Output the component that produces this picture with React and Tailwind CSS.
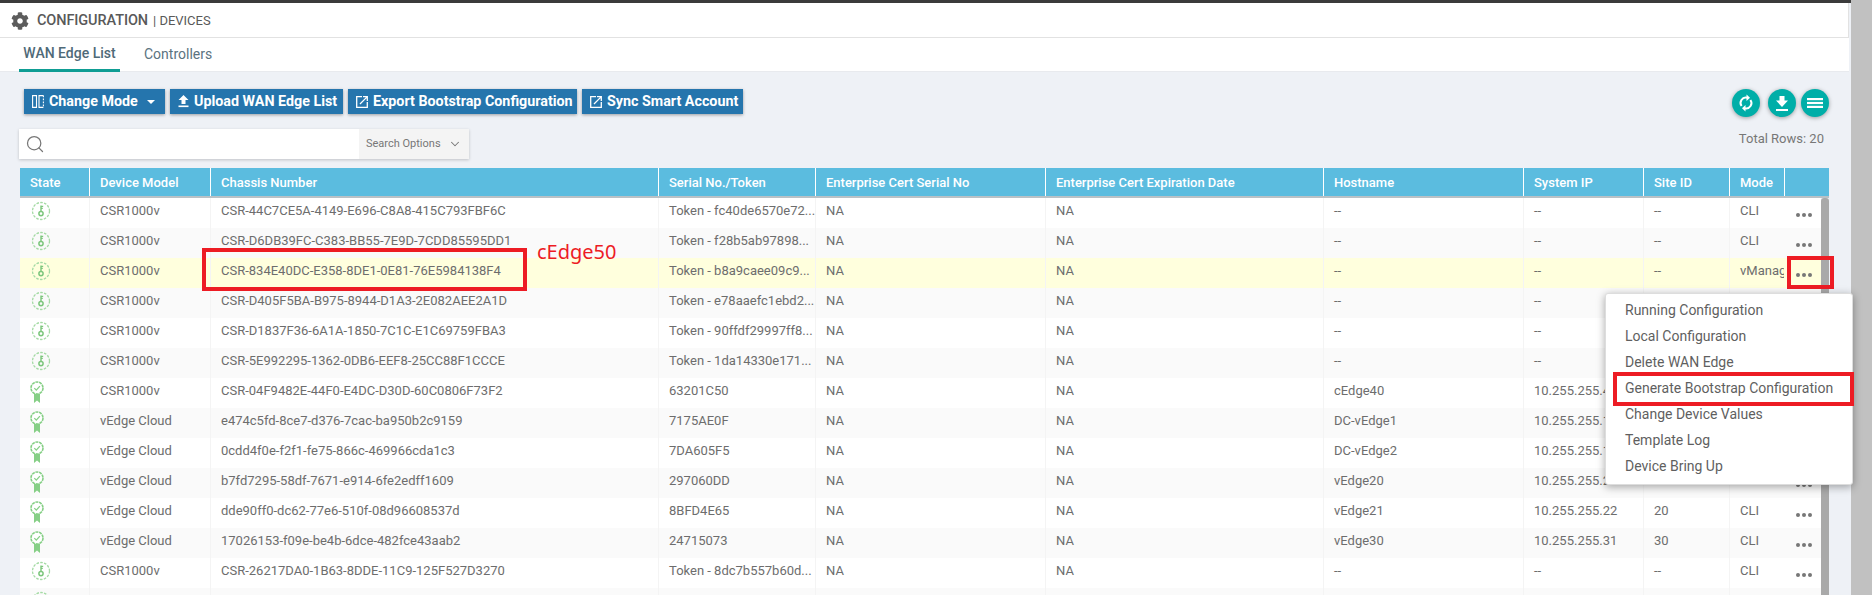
import { FaCog } from "react-icons/fa";
import { Search, ChevronDown } from "lucide-react";

const csr = "CSR1000v";
const cloud = "vEdge Cloud";

const rows = [
  { key: true, model: csr, chassis: "CSR-44C7CE5A-4149-E696-C8A8-415C793FBF6C", serial: "Token - fc40de6570e72...", host: "--", ip: "--", site: "--", mode: "CLI" },
  { key: true, model: csr, chassis: "CSR-D6DB39FC-C383-BB55-7E9D-7CDD85595DD1", serial: "Token - f28b5ab97898...", host: "--", ip: "--", site: "--", mode: "CLI" },
  { key: true, model: csr, chassis: "CSR-834E40DC-E358-8DE1-0E81-76E5984138F4", serial: "Token - b8a9caee09c9...", host: "--", ip: "--", site: "--", mode: "vManage", active: true },
  { key: true, model: csr, chassis: "CSR-D405F5BA-B975-8944-D1A3-2E082AEE2A1D", serial: "Token - e78aaefc1ebd2...", host: "--", ip: "--", site: "--", mode: "CLI" },
  { key: true, model: csr, chassis: "CSR-D1837F36-6A1A-1850-7C1C-E1C69759FBA3", serial: "Token - 90ffdf29997ff8...", host: "--", ip: "--", site: "--", mode: "CLI" },
  { key: true, model: csr, chassis: "CSR-5E992295-1362-0DB6-EEF8-25CC88F1CCCE", serial: "Token - 1da14330e171...", host: "--", ip: "--", site: "--", mode: "CLI" },
  { model: csr, chassis: "CSR-04F9482E-44F0-E4DC-D30D-60C0806F73F2", serial: "63201C50", host: "cEdge40", ip: "10.255.255.41", site: "40", mode: "CLI" },
  { model: cloud, chassis: "e474c5fd-8ce7-d376-7cac-ba950b2c9159", serial: "7175AE0F", host: "DC-vEdge1", ip: "10.255.255.11", site: "10", mode: "CLI" },
  { model: cloud, chassis: "0cdd4f0e-f2f1-fe75-866c-469966cda1c3", serial: "7DA605F5", host: "DC-vEdge2", ip: "10.255.255.12", site: "10", mode: "CLI" },
  { model: cloud, chassis: "b7fd7295-58df-7671-e914-6fe2edff1609", serial: "297060DD", host: "vEdge20", ip: "10.255.255.21", site: "20", mode: "CLI" },
  { model: cloud, chassis: "dde90ff0-dc62-77e6-510f-08d96608537d", serial: "8BFD4E65", host: "vEdge21", ip: "10.255.255.22", site: "20", mode: "CLI" },
  { model: cloud, chassis: "17026153-f09e-be4b-6dce-482fce43aab2", serial: "24715073", host: "vEdge30", ip: "10.255.255.31", site: "30", mode: "CLI" },
  { key: true, model: csr, chassis: "CSR-26217DA0-1B63-8DDE-11C9-125F527D3270", serial: "Token - 8dc7b557b60d...", host: "--", ip: "--", site: "--", mode: "CLI" },
  { key: true, model: csr, chassis: "CSR-7B1F0C52-3E41-9A07-5D2C-60A1E48C92D7", serial: "Token - 4ac1e0b97d35...", host: "--", ip: "--", site: "--", mode: "CLI" },
];

const headers = [
  "State",
  "Device Model",
  "Chassis Number",
  "Serial No./Token",
  "Enterprise Cert Serial No",
  "Enterprise Cert Expiration Date",
  "Hostname",
  "System IP",
  "Site ID",
  "Mode",
  "",
];

const menuItems = [
  "Running Configuration",
  "Local Configuration",
  "Delete WAN Edge",
  "Generate Bootstrap Configuration",
  "Change Device Values",
  "Template Log",
  "Device Bring Up",
];

const KeyIcon = () => (
  <svg width="20" height="20" viewBox="0 0 20 20" fill="none" className="ml-[12px]">
    <circle cx="10" cy="10" r="8.5" stroke="#a5dba5" strokeWidth="1.3" strokeDasharray="2.6 1.3" />
    <circle cx="10" cy="12.6" r="2.1" stroke="#7cc67c" strokeWidth="1.5" />
    <path d="M10 10.5V4.6M10 5.4h2.2M10 7.4h1.8" stroke="#7cc67c" strokeWidth="1.4" />
  </svg>
);

const CertIcon = () => (
  <svg width="16" height="22" viewBox="0 0 16 22" fill="none" className="ml-[10px]">
    <path d="M5 13v9l3-2.4 3 2.4v-9z" fill="#86cf86" />
    <circle cx="8" cy="7" r="6" fill="#fff" stroke="#86cf86" strokeWidth="1.6" strokeDasharray="3 0.7" />
    <path d="M5.3 7.1l2 2 3.6-4" stroke="#86cf86" strokeWidth="1.3" />
  </svg>
);

const SplitIcon = () => (
  <svg width="12" height="13" viewBox="0 0 12 13" fill="none" stroke="#fff" strokeWidth="1.1">
    <path d="M4.5 0.6H0.6v11.8h3.9M4.5 0v13M7 0v13" />
    <path d="M7 0.6h4.4M11.4 0.6v1.6M11.4 3.6v1.6M11.4 6.6v1.6M11.4 9.6v1.6M7 12.4h4.4" />
  </svg>
);

const UploadIcon = () => (
  <svg width="11" height="13" viewBox="0 0 11 13" fill="#fff">
    <path d="M5.5 0L10.5 5H7.5V9H3.5V5H0.5z" />
    <rect x="0.5" y="10.5" width="10" height="1.6" />
  </svg>
);

const ExportIcon = () => (
  <svg width="12" height="12" viewBox="0 0 12 12" fill="none" stroke="#fff" strokeWidth="1.3">
    <path d="M6 0.7H0.7v10.6h10.6V6" />
    <path d="M4 8L10.6 1.4M7 0.7h4.3V5" />
  </svg>
);

const ActionButton = ({ icon, label, caret, width }) => (
  <button type="button" className={`h-[25px] ${width} bg-[#2575ad] text-white text-[14.3px] font-bold flex items-center pl-[8px] gap-[5px] whitespace-nowrap shadow-[0_1px_3px_rgba(0,0,0,0.35)]`}>
    {icon}
    {label}
    {caret && <span className="ml-[4px] w-0 h-0 border-x-[4px] border-x-transparent border-t-[4px] border-t-white" />}
  </button>
);

const RoundButton = ({ children }) => (
  <button type="button" className="w-[28px] h-[28px] rounded-full bg-[#00aea8] flex items-center justify-center shadow-[0_1px_4px_rgba(0,0,0,0.35)]">
    {children}
  </button>
);

const rowColor = (row, i) => {
  if (row.active) return "bg-[#ffffdd]";
  return i % 2 === 0 ? "bg-white" : "bg-[#fafafa]";
};

const App = () => {
  return (
    <div className="relative w-[1874px] h-[595px] overflow-hidden flex bg-white font-[Roboto,sans-serif]">
      <div className="w-[1851px] h-full flex flex-col bg-[#eef1f6]">
        <div className="h-[3px] bg-[#3b3b3b] shrink-0" />

        <div className="w-[1849px] h-[35px] shrink-0 bg-white border-b border-[#e2e2e2] border-r flex items-center pl-[11px] pt-[1px] gap-[8px] text-[#595959]">
          <FaCog className="text-[18px] text-[#5c5c5c]" />
          <span className="text-[14.5px] font-medium tracking-[-0.1px]">CONFIGURATION</span>
          <span className="text-[13px] -ml-[3px]">| DEVICES</span>
        </div>

        <div className="w-[1849px] h-[34px] shrink-0 bg-white border-b border-[#e8eaee] flex pl-[19px] text-[14px]">
          <div className="w-[101px] h-[34px] border-b-[3px] border-[#0f9d94] flex items-center justify-center font-medium text-[#4f6a78] pb-[1px]">
            WAN Edge List
          </div>
          <div className="ml-[24px] h-[34px] flex items-center text-[#5b7380] pb-[3px] pt-[2px]">Controllers</div>
        </div>

        <div className="flex flex-col pl-[19px] pr-[22px] pt-[17px]">
          <div className="flex justify-between items-start">
            <div className="flex gap-[5px] ml-[5px]">
              <ActionButton icon={<SplitIcon />} label="Change Mode" caret width="w-[141px]" />
              <ActionButton icon={<UploadIcon />} label="Upload WAN Edge List" width="w-[173px]" />
              <ActionButton icon={<ExportIcon />} label="Export Bootstrap Configuration" width="w-[229px]" />
              <ActionButton icon={<ExportIcon />} label="Sync Smart Account" width="w-[161px]" />
            </div>
            <div className="flex items-center">
              <RoundButton>
                <svg width="18" height="18" viewBox="0 0 18 18" fill="none" stroke="#fff" strokeWidth="2">
                  <path d="M10 3.7A5.3 5.3 0 0 0 4.6 12" />
                  <path d="M8 14.3A5.3 5.3 0 0 0 13.4 6" />
                  <path d="M9.5.5L13 3.7 9.5 7z" fill="#fff" stroke="none" />
                  <path d="M8.5 17.5L5 14.3 8.5 11z" fill="#fff" stroke="none" />
                </svg>
              </RoundButton>
              <div className="ml-[8px]">
                <RoundButton>
                  <svg width="12" height="15" viewBox="0 0 12 15" fill="#fff">
                    <path d="M3.5 0h5v4.5H12L6 11 0 4.5h3.5z" />
                    <rect y="13" width="12" height="2" />
                  </svg>
                </RoundButton>
              </div>
              <div className="ml-[5px]">
                <RoundButton>
                  <svg width="16" height="10" viewBox="0 0 16 10" fill="#fff">
                    <rect width="16" height="2.2" />
                    <rect y="3.9" width="16" height="2.2" />
                    <rect y="7.8" width="16" height="2.2" />
                  </svg>
                </RoundButton>
              </div>
            </div>
          </div>

          <div className="flex justify-between items-start mt-[12px]">
            <div className="w-[450px] h-[30px] bg-white flex shadow-[0_1px_3px_rgba(0,0,0,0.2)]">
              <div className="w-[340px] flex items-center pl-[6px]">
                <Search size={20} strokeWidth={1.5} className="text-[#777]" />
              </div>
              <div className="flex-1 bg-[#f4f4f4] flex items-center pl-[7px] gap-[7px] text-[11px] text-[#777]">
                Search Options
                <ChevronDown size={14} strokeWidth={1.8} />
              </div>
            </div>
            <span className="mr-[5px] text-[13px] text-[#777]">Total Rows: 20</span>
          </div>

          <div className="mt-[9px] ml-[1px] w-[1809px]">
            <div className="grid grid-cols-[69px_121px_448px_157px_230px_278px_200px_120px_86px_55px_45px] h-[30px] bg-[#5bbcdf] border-b-2 border-[#b9c1c6] text-white text-[13px] font-medium">
              {headers.map((h, i) => (
                <div key={i} className={`flex items-center pl-[10px] pt-[2px] whitespace-nowrap ${i > 0 ? "border-l border-white" : ""}`}>
                  {h}
                </div>
              ))}
            </div>

            <div className="flex">
              <div className="w-[1801px]">
                {rows.map((row, i) => (
                  <div
                    key={row.chassis}
                    className={`grid grid-cols-[69px_121px_448px_157px_230px_278px_200px_120px_86px_55px_37px] h-[30px] text-[13px] text-[#6d6d6d] ${rowColor(row, i)}`}
                  >
                    <div className="flex items-start pt-[3px] -ml-[1px]">
                      {row.key ? <KeyIcon /> : <CertIcon />}
                    </div>
                    {[row.model, row.chassis, row.serial, "NA", "NA", row.host, row.ip, row.site, row.mode].map((val, j) => (
                      <div key={j} className="border-l border-[#f4f4f4] pl-[10px] pb-[4px] flex items-center whitespace-nowrap overflow-hidden">
                        {val}
                      </div>
                    ))}
                    <div className="flex items-center justify-center gap-[2px] pt-[4px] pl-[2px]">
                      <span className="w-[4px] h-[4px] rounded-full bg-[#777]" />
                      <span className="w-[4px] h-[4px] rounded-full bg-[#777]" />
                      <span className="w-[4px] h-[4px] rounded-full bg-[#777]" />
                    </div>
                  </div>
                ))}
              </div>
              <div className="w-[8px] bg-[#a9a9a9] rounded-t-[3px]" />
            </div>
          </div>
        </div>
      </div>

      <div className="w-[21px] h-full bg-[#c1c1c1]" />

      {/* annotations and the open row menu sit over the table */}
      <div className="absolute left-[202px] top-[248px] w-[325px] h-[43px] border-[4px] border-[#ed1c24]" />
      <span className="absolute left-[537px] top-[237px] text-[20px] text-[#ed1c24] font-['Noto_Sans',sans-serif]">cEdge50</span>
      <div className="absolute left-[1787px] top-[256px] w-[47px] h-[33px] border-[4px] border-[#ed1c24]" />

      <div className="absolute left-[1605px] top-[293px] w-[248px] h-[192px] bg-white rounded-[3px] pt-[3px] border border-[#ddd] shadow-[0_2px_8px_rgba(0,0,0,0.35)]">
        {menuItems.map((item) => (
          <div key={item} className="h-[26px] flex items-center pl-[19px] text-[14px] text-[#5f5f5f] whitespace-nowrap">
            {item}
          </div>
        ))}
      </div>
      <div className="absolute left-[1613px] top-[372px] w-[241px] h-[34px] border-[4px] border-[#ed1c24]" />
    </div>
  );
};

export default App;
